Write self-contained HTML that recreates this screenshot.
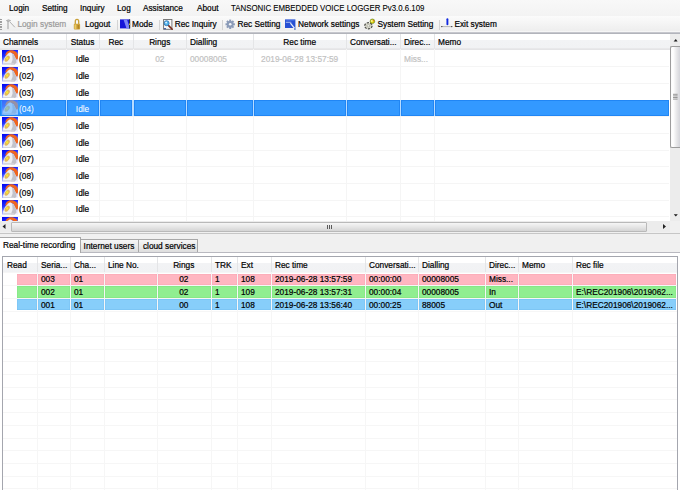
<!DOCTYPE html><html><head><meta charset="utf-8"><style>
*{margin:0;padding:0;box-sizing:border-box}
html,body{width:680px;height:490px;overflow:hidden;background:#f0f0f0;font-family:"Liberation Sans", sans-serif;font-size:8.3px}
.a{position:absolute}
.t{position:absolute;white-space:nowrap;line-height:10px;font-size:8.3px;-webkit-text-stroke:0.2px currentColor}
.g{font-size:8.9px;transform:scaleX(0.935);transform-origin:0 0;line-height:10px}
.gc{font-size:8.9px;transform:scaleX(0.935);transform-origin:50% 0;line-height:10px}
</style></head><body><div class="a" style="left:0;top:0;width:680px;height:16px;background:linear-gradient(#f8f8f8,#f3f3f3)"></div>
<div class="t " style="left:8.5px;top:3.1px;color:#000;font-size:8.8px;transform:scaleX(0.935);transform-origin:0 0">Login</div>
<div class="t " style="left:42px;top:3.1px;color:#000;font-size:8.8px;transform:scaleX(0.935);transform-origin:0 0">Setting</div>
<div class="t " style="left:79.8px;top:3.1px;color:#000;font-size:8.8px;transform:scaleX(0.935);transform-origin:0 0">Inquiry</div>
<div class="t " style="left:116.7px;top:3.1px;color:#000;font-size:8.8px;transform:scaleX(0.935);transform-origin:0 0">Log</div>
<div class="t " style="left:143.2px;top:3.1px;color:#000;font-size:8.8px;transform:scaleX(0.935);transform-origin:0 0">Assistance</div>
<div class="t " style="left:196.8px;top:3.1px;color:#000;font-size:8.8px;transform:scaleX(0.935);transform-origin:0 0">About</div>
<div class="t " style="left:231.2px;top:2.7px;color:#000;font-size:9.4px;transform:scaleX(0.839);transform-origin:0 0;-webkit-text-stroke:0.1px">TANSONIC EMBEDDED VOICE LOGGER Pv3.0.6.109</div>
<div class="a" style="left:0;top:16px;width:680px;height:16px;background:linear-gradient(#fbfbfb,#ededed)"></div>
<div class="a" style="left:0;top:31px;width:680px;height:1px;background:#f6f6f6"></div>
<div class="a" style="left:0;top:32px;width:680px;height:1px;background:#c6c7cd"></div>
<div class="a" style="left:0;top:33px;width:680px;height:1px;background:#b2b4bb"></div>
<div class="t " style="left:17.4px;top:18.6px;color:#9a9a9a;">Login system</div>
<div class="t " style="left:85px;top:18.6px;color:#000;">Logout</div>
<div class="t " style="left:132px;top:18.6px;color:#000;">Mode</div>
<div class="t " style="left:174.75px;top:18.6px;color:#000;">Rec Inquiry</div>
<div class="t " style="left:237.5px;top:18.6px;color:#000;">Rec Setting</div>
<div class="t " style="left:298.1px;top:18.6px;color:#000;">Network settings</div>
<div class="t " style="left:377.5px;top:18.6px;color:#000;">System Setting</div>
<div class="t " style="left:454.4px;top:18.6px;color:#000;">Exit system</div>
<div class="a" style="left:117px;top:19.5px;width:1px;height:10px;background:#d4d4d4"></div>
<div class="a" style="left:158.75px;top:19.5px;width:1px;height:10px;background:#d4d4d4"></div>
<div class="a" style="left:221.9px;top:19.5px;width:1px;height:10px;background:#d4d4d4"></div>
<div class="a" style="left:438.75px;top:19.5px;width:1px;height:10px;background:#d4d4d4"></div>
<div class="a" style="left:0;top:18.5px;width:1.5px;height:1.5px;background:#a0a0a0"></div>
<div class="a" style="left:0;top:21px;width:1.5px;height:1.5px;background:#a0a0a0"></div>
<div class="a" style="left:0;top:23.5px;width:1.5px;height:1.5px;background:#a0a0a0"></div>
<div class="a" style="left:0;top:26px;width:1.5px;height:1.5px;background:#a0a0a0"></div>
<div class="a" style="left:0;top:28.5px;width:1.5px;height:1.5px;background:#a0a0a0"></div>
<svg class="a" style="left:0;top:16px" width="680" height="16" viewBox="0 16 680 16"><rect x="0" y="18.9" width="0.8" height="0.9" fill="#9a9a9a"/><rect x="0" y="21.5" width="0.8" height="0.9" fill="#9a9a9a"/><rect x="0" y="24.1" width="0.8" height="0.9" fill="#9a9a9a"/><rect x="0" y="26.9" width="0.8" height="0.9" fill="#9a9a9a"/><path d="M6.4 20.6 Q8.5 19 10.6 20.6 Q8.5 22.4 6.4 20.6 Z" fill="#c4c4c4" stroke="#a8a8a8" stroke-width="0.8"/><path d="M8 21.6 L8 28.6" stroke="#a4a4a4" stroke-width="1.1" stroke-linecap="round"/><path d="M10.2 22.3 L14.6 27" stroke="#b0b0b0" stroke-width="1" stroke-linecap="round"/><path d="M75.3 24.5 L75.3 21.4 Q75.3 19.4 77 19.4 Q78.7 19.4 78.7 21.4 L78.7 24.5" stroke="#c9a038" stroke-width="1.3" fill="none"/><rect x="73.8" y="23.8" width="6.3" height="5.8" rx="1" fill="#cfa23a"/><rect x="74.5" y="24.5" width="1.8" height="4.4" fill="#e6c868"/><rect x="77.6" y="25" width="1.6" height="3.8" fill="#b08428"/><rect x="120" y="19.4" width="10" height="9" fill="#1414d8"/><path d="M123.5 19.4 L127 19.4 L130 28.4 L126.5 28.4 Z" fill="#7c84f8"/><rect x="129" y="19.4" width="1.2" height="9" fill="#203040"/><rect x="129" y="23.5" width="1.2" height="1.5" fill="#c0b040"/><rect x="163.6" y="19.5" width="8.3" height="9.8" fill="#fafafa" stroke="#6c6c6c" stroke-width="0.9"/><path d="M168.6 25.6 L172.2 29.2" stroke="#7a2a18" stroke-width="1.6" stroke-linecap="round"/><circle cx="166.6" cy="23.2" r="2.5" fill="#58b8ee" stroke="#2a6aa8" stroke-width="0.8"/><circle cx="166.1" cy="22.6" r="0.9" fill="#e8f8ff"/><path d="M164 28.7 L166 28.7" stroke="#2a4aa0" stroke-width="1"/><g transform="translate(230.2 24.3)" fill="#8b9bb8"><circle r="3.4"/><rect x="-1" y="-4.7" width="2" height="9.4"/><rect x="-4.7" y="-1" width="9.4" height="2"/><rect x="-1" y="-4.7" width="2" height="9.4" transform="rotate(45)"/><rect x="-1" y="-4.7" width="2" height="9.4" transform="rotate(-45)"/><circle r="1.3" fill="#f4f6fa"/></g><rect x="285" y="19.4" width="10.4" height="8.6" fill="#2650d4"/><rect x="285.8" y="21.8" width="5.5" height="0.9" fill="#b8c8f4"/><rect x="285.8" y="20.3" width="8.8" height="0.6" fill="#4a78e8"/><path d="M290.8 23.6 L294.6 28.4" stroke="#e8eef8" stroke-width="1.3" stroke-linecap="round"/><circle cx="294.9" cy="29" r="0.9" fill="#5a7ac8"/><ellipse cx="368.4" cy="25.8" rx="3.7" ry="3.1" fill="#d6d6c8" stroke="#4c4c48" stroke-width="1.2" stroke-dasharray="2.2 1.3"/><ellipse cx="368.4" cy="25.8" rx="1.4" ry="1.1" fill="#f2f2ea" stroke="#8a8a80" stroke-width="0.5"/><circle cx="372.4" cy="21.3" r="2.3" fill="#d8d010" stroke="#587018" stroke-width="0.6"/><circle cx="371.8" cy="20.9" r="1" fill="#fffa90"/><circle cx="373.6" cy="20.6" r="0.7" fill="#f07010"/><path d="M447.4 19.3 L447.4 24.2" stroke="#1028e0" stroke-width="1.9" stroke-linecap="round"/><path d="M441.8 26.6 L451.8 26.6" stroke="#b8b8b8" stroke-width="1"/><circle cx="441.8" cy="26.6" r="0.7" fill="#303030"/><circle cx="451.8" cy="26.6" r="0.7" fill="#303030"/></svg>
<div class="a" style="left:0;top:34px;width:670px;height:187px;background:#fff"></div>
<div class="a" style="left:0;top:34px;width:670px;height:15px;background:linear-gradient(#ffffff 0%,#ffffff 40%,#f2f3f5 42%,#f1f2f4 100%)"></div>
<div class="a" style="left:0;top:47.5px;width:670px;height:2px;background:linear-gradient(#eaeaec,#e2e2e4)"></div>
<div class="a" style="left:65.8px;top:34px;width:1px;height:15px;background:#e4e5e7"></div>
<div class="a" style="left:98.9px;top:34px;width:1px;height:15px;background:#e4e5e7"></div>
<div class="a" style="left:132.5px;top:34px;width:1px;height:15px;background:#e4e5e7"></div>
<div class="a" style="left:186.0px;top:34px;width:1px;height:15px;background:#e4e5e7"></div>
<div class="a" style="left:253.0px;top:34px;width:1px;height:15px;background:#e4e5e7"></div>
<div class="a" style="left:346.3px;top:34px;width:1px;height:15px;background:#e4e5e7"></div>
<div class="a" style="left:400.1px;top:34px;width:1px;height:15px;background:#e4e5e7"></div>
<div class="a" style="left:433.6px;top:34px;width:1px;height:15px;background:#e4e5e7"></div>
<div class="t g" style="left:2.8px;top:36.85px;color:#000;">Channels</div>
<div class="t gc" style="left:66.0px;width:33.10000000000001px;text-align:center;top:36.85px;color:#000;">Status</div>
<div class="t gc" style="left:99.10000000000001px;width:33.599999999999994px;text-align:center;top:36.85px;color:#000;">Rec</div>
<div class="t gc" style="left:132.7px;width:53.5px;text-align:center;top:36.85px;color:#000;">Rings</div>
<div class="t g" style="left:190.1px;top:36.85px;color:#000;">Dialling</div>
<div class="t gc" style="left:253.2px;width:93.30000000000001px;text-align:center;top:36.85px;color:#000;">Rec time</div>
<div class="t g" style="left:350.40000000000003px;top:36.85px;color:#000;">Conversati...</div>
<div class="t g" style="left:404.20000000000005px;top:36.85px;color:#000;">Direc...</div>
<div class="t g" style="left:437.70000000000005px;top:36.85px;color:#000;">Memo</div>
<div class="a" style="left:0;top:66.167px;width:669px;height:1px;background:#f5f5f5"></div>
<div class="a" style="left:0;top:82.834px;width:669px;height:1px;background:#f5f5f5"></div>
<div class="a" style="left:0;top:99.501px;width:669px;height:1px;background:#f5f5f5"></div>
<div class="a" style="left:0;top:100.001px;width:669px;height:16px;background:#3399ff"></div>
<div class="a" style="left:0;top:116.168px;width:669px;height:1px;background:#f5f5f5"></div>
<div class="a" style="left:0;top:132.835px;width:669px;height:1px;background:#f5f5f5"></div>
<div class="a" style="left:0;top:149.502px;width:669px;height:1px;background:#f5f5f5"></div>
<div class="a" style="left:0;top:166.169px;width:669px;height:1px;background:#f5f5f5"></div>
<div class="a" style="left:0;top:182.836px;width:669px;height:1px;background:#f5f5f5"></div>
<div class="a" style="left:0;top:199.50300000000001px;width:669px;height:1px;background:#f5f5f5"></div>
<div class="a" style="left:0;top:216.17000000000002px;width:669px;height:1px;background:#f5f5f5"></div>
<div class="a" style="left:0;top:232.83700000000002px;width:669px;height:1px;background:#f5f5f5"></div>
<div class="a" style="left:65.8px;top:49px;width:1px;height:172px;background:#f5f5f5"></div>
<div class="a" style="left:98.9px;top:49px;width:1px;height:172px;background:#f5f5f5"></div>
<div class="a" style="left:132.5px;top:49px;width:1px;height:172px;background:#f5f5f5"></div>
<div class="a" style="left:186.0px;top:49px;width:1px;height:172px;background:#f5f5f5"></div>
<div class="a" style="left:253.0px;top:49px;width:1px;height:172px;background:#f5f5f5"></div>
<div class="a" style="left:346.3px;top:49px;width:1px;height:172px;background:#f5f5f5"></div>
<div class="a" style="left:400.1px;top:49px;width:1px;height:172px;background:#f5f5f5"></div>
<div class="a" style="left:433.6px;top:49px;width:1px;height:172px;background:#f5f5f5"></div>
<div class="a" style="left:0;top:100px;width:669px;height:16px;background:#b8dcff"></div>
<div class="a" style="left:0px;top:100px;width:65.8px;height:16px;background:#3399ff;box-shadow:inset 0 0 0 1px #2186f4"></div>
<div class="a" style="left:66.8px;top:100px;width:32.10000000000001px;height:16px;background:#3399ff;box-shadow:inset 0 0 0 1px #2186f4"></div>
<div class="a" style="left:99.9px;top:100px;width:32.599999999999994px;height:16px;background:#3399ff;box-shadow:inset 0 0 0 1px #2186f4"></div>
<div class="a" style="left:133.5px;top:100px;width:52.5px;height:16px;background:#3399ff;box-shadow:inset 0 0 0 1px #2186f4"></div>
<div class="a" style="left:187.0px;top:100px;width:66.0px;height:16px;background:#3399ff;box-shadow:inset 0 0 0 1px #2186f4"></div>
<div class="a" style="left:254.0px;top:100px;width:92.30000000000001px;height:16px;background:#3399ff;box-shadow:inset 0 0 0 1px #2186f4"></div>
<div class="a" style="left:347.3px;top:100px;width:52.80000000000001px;height:16px;background:#3399ff;box-shadow:inset 0 0 0 1px #2186f4"></div>
<div class="a" style="left:401.1px;top:100px;width:32.5px;height:16px;background:#3399ff;box-shadow:inset 0 0 0 1px #2186f4"></div>
<div class="a" style="left:434.6px;top:100px;width:234.39999999999998px;height:16px;background:#3399ff;box-shadow:inset 0 0 0 1px #2186f4"></div>
<div class="a" style="left:1.5px;top:50.35px;width:16.2px;height:14.6px;overflow:hidden"><svg width="16.2" height="14.6" viewBox="0 0 16.2 14.6"><defs><linearGradient id="bg0" x1="0" y1="0" x2="0.45" y2="1"><stop offset="0" stop-color="#0000f0"/><stop offset="0.4" stop-color="#2232ff"/><stop offset="0.72" stop-color="#98a0ff"/><stop offset="1" stop-color="#ececff"/></linearGradient></defs>
<rect x="0" y="0" width="16.2" height="14.6" fill="url(#bg0)"/>
<path d="M3.4 5.8 C3.2 2.8,5.6 0.3,9 0.3 C12.6 0.3,15.6 2.4,16.1 5.6 C16.3 7.2,16 8.6,15.4 9.4 L13 9 C13.2 7.2,12.6 4.6,10.6 3.4 C9 2.6,6.8 2.8,5.8 4.8 Z" fill="#f0661e"/>
<path d="M0.8 12 L3 7 L6.2 3.4 L8 2.3 L9.6 3.1 L11.6 4.4 L13.8 8.4 L14.6 12.6 L12.6 14.4 L2 14.4 Z" fill="#efeff3"/>
<path d="M10.2 4 L11.6 4.4 L13.8 8.4 L14.6 12.6 L12.6 14.4 L8.8 14.4 L10.6 9.6 Z" fill="#c2c2ca"/>
<path d="M1.6 14.4 L12.6 14.4 L12 13.2 L2.2 12.9 Z" fill="#d4d4dc"/>
<ellipse cx="5.2" cy="8.7" rx="2" ry="3.4" transform="rotate(36 5.2 8.7)" fill="#e4b85a"/>
<circle cx="5.1" cy="8.4" r="1.1" fill="#f8ec30"/>
</svg></div>
<div class="t g" style="left:19px;top:54.2px;color:#000;">(01)</div>
<div class="t gc" style="left:66.0px;width:33.10000000000001px;text-align:center;top:54.25px;color:#000;">Idle</div>
<div class="a" style="left:1.5px;top:67.017px;width:16.2px;height:14.6px;overflow:hidden"><svg width="16.2" height="14.6" viewBox="0 0 16.2 14.6"><defs><linearGradient id="bg1" x1="0" y1="0" x2="0.45" y2="1"><stop offset="0" stop-color="#0000f0"/><stop offset="0.4" stop-color="#2232ff"/><stop offset="0.72" stop-color="#98a0ff"/><stop offset="1" stop-color="#ececff"/></linearGradient></defs>
<rect x="0" y="0" width="16.2" height="14.6" fill="url(#bg1)"/>
<path d="M3.4 5.8 C3.2 2.8,5.6 0.3,9 0.3 C12.6 0.3,15.6 2.4,16.1 5.6 C16.3 7.2,16 8.6,15.4 9.4 L13 9 C13.2 7.2,12.6 4.6,10.6 3.4 C9 2.6,6.8 2.8,5.8 4.8 Z" fill="#f0661e"/>
<path d="M0.8 12 L3 7 L6.2 3.4 L8 2.3 L9.6 3.1 L11.6 4.4 L13.8 8.4 L14.6 12.6 L12.6 14.4 L2 14.4 Z" fill="#efeff3"/>
<path d="M10.2 4 L11.6 4.4 L13.8 8.4 L14.6 12.6 L12.6 14.4 L8.8 14.4 L10.6 9.6 Z" fill="#c2c2ca"/>
<path d="M1.6 14.4 L12.6 14.4 L12 13.2 L2.2 12.9 Z" fill="#d4d4dc"/>
<ellipse cx="5.2" cy="8.7" rx="2" ry="3.4" transform="rotate(36 5.2 8.7)" fill="#e4b85a"/>
<circle cx="5.1" cy="8.4" r="1.1" fill="#f8ec30"/>
</svg></div>
<div class="t g" style="left:19px;top:70.867px;color:#000;">(02)</div>
<div class="t gc" style="left:66.0px;width:33.10000000000001px;text-align:center;top:70.917px;color:#000;">Idle</div>
<div class="a" style="left:1.5px;top:83.684px;width:16.2px;height:14.6px;overflow:hidden"><svg width="16.2" height="14.6" viewBox="0 0 16.2 14.6"><defs><linearGradient id="bg2" x1="0" y1="0" x2="0.45" y2="1"><stop offset="0" stop-color="#0000f0"/><stop offset="0.4" stop-color="#2232ff"/><stop offset="0.72" stop-color="#98a0ff"/><stop offset="1" stop-color="#ececff"/></linearGradient></defs>
<rect x="0" y="0" width="16.2" height="14.6" fill="url(#bg2)"/>
<path d="M3.4 5.8 C3.2 2.8,5.6 0.3,9 0.3 C12.6 0.3,15.6 2.4,16.1 5.6 C16.3 7.2,16 8.6,15.4 9.4 L13 9 C13.2 7.2,12.6 4.6,10.6 3.4 C9 2.6,6.8 2.8,5.8 4.8 Z" fill="#f0661e"/>
<path d="M0.8 12 L3 7 L6.2 3.4 L8 2.3 L9.6 3.1 L11.6 4.4 L13.8 8.4 L14.6 12.6 L12.6 14.4 L2 14.4 Z" fill="#efeff3"/>
<path d="M10.2 4 L11.6 4.4 L13.8 8.4 L14.6 12.6 L12.6 14.4 L8.8 14.4 L10.6 9.6 Z" fill="#c2c2ca"/>
<path d="M1.6 14.4 L12.6 14.4 L12 13.2 L2.2 12.9 Z" fill="#d4d4dc"/>
<ellipse cx="5.2" cy="8.7" rx="2" ry="3.4" transform="rotate(36 5.2 8.7)" fill="#e4b85a"/>
<circle cx="5.1" cy="8.4" r="1.1" fill="#f8ec30"/>
</svg></div>
<div class="t g" style="left:19px;top:87.534px;color:#000;">(03)</div>
<div class="t gc" style="left:66.0px;width:33.10000000000001px;text-align:center;top:87.584px;color:#000;">Idle</div>
<div class="a" style="left:1.5px;top:100.351px;width:16.2px;height:14.6px;overflow:hidden"><svg width="16.2" height="14.6" viewBox="0 0 16.2 14.6"><defs><linearGradient id="bg3" x1="0" y1="0" x2="0.45" y2="1"><stop offset="0" stop-color="#0000f0"/><stop offset="0.4" stop-color="#2232ff"/><stop offset="0.72" stop-color="#98a0ff"/><stop offset="1" stop-color="#ececff"/></linearGradient></defs>
<rect x="0" y="0" width="16.2" height="14.6" fill="url(#bg3)"/>
<path d="M3.4 5.8 C3.2 2.8,5.6 0.3,9 0.3 C12.6 0.3,15.6 2.4,16.1 5.6 C16.3 7.2,16 8.6,15.4 9.4 L13 9 C13.2 7.2,12.6 4.6,10.6 3.4 C9 2.6,6.8 2.8,5.8 4.8 Z" fill="#f0661e"/>
<path d="M0.8 12 L3 7 L6.2 3.4 L8 2.3 L9.6 3.1 L11.6 4.4 L13.8 8.4 L14.6 12.6 L12.6 14.4 L2 14.4 Z" fill="#efeff3"/>
<path d="M10.2 4 L11.6 4.4 L13.8 8.4 L14.6 12.6 L12.6 14.4 L8.8 14.4 L10.6 9.6 Z" fill="#c2c2ca"/>
<path d="M1.6 14.4 L12.6 14.4 L12 13.2 L2.2 12.9 Z" fill="#d4d4dc"/>
<ellipse cx="5.2" cy="8.7" rx="2" ry="3.4" transform="rotate(36 5.2 8.7)" fill="#e4b85a"/>
<circle cx="5.1" cy="8.4" r="1.1" fill="#f8ec30"/>
</svg></div>
<div class="a" style="left:1.5px;top:100.351px;width:16.2px;height:14.6px;background:linear-gradient(rgba(255,255,255,0.12),rgba(255,255,255,0.12)),rgba(51,153,255,0.55)"></div>
<div class="t g" style="left:19px;top:104.20100000000001px;color:#fff;-webkit-text-stroke:0">(04)</div>
<div class="t gc" style="left:66.0px;width:33.10000000000001px;text-align:center;top:104.251px;color:#fff;-webkit-text-stroke:0.05px">Idle</div>
<div class="a" style="left:1.5px;top:117.018px;width:16.2px;height:14.6px;overflow:hidden"><svg width="16.2" height="14.6" viewBox="0 0 16.2 14.6"><defs><linearGradient id="bg4" x1="0" y1="0" x2="0.45" y2="1"><stop offset="0" stop-color="#0000f0"/><stop offset="0.4" stop-color="#2232ff"/><stop offset="0.72" stop-color="#98a0ff"/><stop offset="1" stop-color="#ececff"/></linearGradient></defs>
<rect x="0" y="0" width="16.2" height="14.6" fill="url(#bg4)"/>
<path d="M3.4 5.8 C3.2 2.8,5.6 0.3,9 0.3 C12.6 0.3,15.6 2.4,16.1 5.6 C16.3 7.2,16 8.6,15.4 9.4 L13 9 C13.2 7.2,12.6 4.6,10.6 3.4 C9 2.6,6.8 2.8,5.8 4.8 Z" fill="#f0661e"/>
<path d="M0.8 12 L3 7 L6.2 3.4 L8 2.3 L9.6 3.1 L11.6 4.4 L13.8 8.4 L14.6 12.6 L12.6 14.4 L2 14.4 Z" fill="#efeff3"/>
<path d="M10.2 4 L11.6 4.4 L13.8 8.4 L14.6 12.6 L12.6 14.4 L8.8 14.4 L10.6 9.6 Z" fill="#c2c2ca"/>
<path d="M1.6 14.4 L12.6 14.4 L12 13.2 L2.2 12.9 Z" fill="#d4d4dc"/>
<ellipse cx="5.2" cy="8.7" rx="2" ry="3.4" transform="rotate(36 5.2 8.7)" fill="#e4b85a"/>
<circle cx="5.1" cy="8.4" r="1.1" fill="#f8ec30"/>
</svg></div>
<div class="t g" style="left:19px;top:120.86800000000001px;color:#000;">(05)</div>
<div class="t gc" style="left:66.0px;width:33.10000000000001px;text-align:center;top:120.918px;color:#000;">Idle</div>
<div class="a" style="left:1.5px;top:133.685px;width:16.2px;height:14.6px;overflow:hidden"><svg width="16.2" height="14.6" viewBox="0 0 16.2 14.6"><defs><linearGradient id="bg5" x1="0" y1="0" x2="0.45" y2="1"><stop offset="0" stop-color="#0000f0"/><stop offset="0.4" stop-color="#2232ff"/><stop offset="0.72" stop-color="#98a0ff"/><stop offset="1" stop-color="#ececff"/></linearGradient></defs>
<rect x="0" y="0" width="16.2" height="14.6" fill="url(#bg5)"/>
<path d="M3.4 5.8 C3.2 2.8,5.6 0.3,9 0.3 C12.6 0.3,15.6 2.4,16.1 5.6 C16.3 7.2,16 8.6,15.4 9.4 L13 9 C13.2 7.2,12.6 4.6,10.6 3.4 C9 2.6,6.8 2.8,5.8 4.8 Z" fill="#f0661e"/>
<path d="M0.8 12 L3 7 L6.2 3.4 L8 2.3 L9.6 3.1 L11.6 4.4 L13.8 8.4 L14.6 12.6 L12.6 14.4 L2 14.4 Z" fill="#efeff3"/>
<path d="M10.2 4 L11.6 4.4 L13.8 8.4 L14.6 12.6 L12.6 14.4 L8.8 14.4 L10.6 9.6 Z" fill="#c2c2ca"/>
<path d="M1.6 14.4 L12.6 14.4 L12 13.2 L2.2 12.9 Z" fill="#d4d4dc"/>
<ellipse cx="5.2" cy="8.7" rx="2" ry="3.4" transform="rotate(36 5.2 8.7)" fill="#e4b85a"/>
<circle cx="5.1" cy="8.4" r="1.1" fill="#f8ec30"/>
</svg></div>
<div class="t g" style="left:19px;top:137.535px;color:#000;">(06)</div>
<div class="t gc" style="left:66.0px;width:33.10000000000001px;text-align:center;top:137.585px;color:#000;">Idle</div>
<div class="a" style="left:1.5px;top:150.352px;width:16.2px;height:14.6px;overflow:hidden"><svg width="16.2" height="14.6" viewBox="0 0 16.2 14.6"><defs><linearGradient id="bg6" x1="0" y1="0" x2="0.45" y2="1"><stop offset="0" stop-color="#0000f0"/><stop offset="0.4" stop-color="#2232ff"/><stop offset="0.72" stop-color="#98a0ff"/><stop offset="1" stop-color="#ececff"/></linearGradient></defs>
<rect x="0" y="0" width="16.2" height="14.6" fill="url(#bg6)"/>
<path d="M3.4 5.8 C3.2 2.8,5.6 0.3,9 0.3 C12.6 0.3,15.6 2.4,16.1 5.6 C16.3 7.2,16 8.6,15.4 9.4 L13 9 C13.2 7.2,12.6 4.6,10.6 3.4 C9 2.6,6.8 2.8,5.8 4.8 Z" fill="#f0661e"/>
<path d="M0.8 12 L3 7 L6.2 3.4 L8 2.3 L9.6 3.1 L11.6 4.4 L13.8 8.4 L14.6 12.6 L12.6 14.4 L2 14.4 Z" fill="#efeff3"/>
<path d="M10.2 4 L11.6 4.4 L13.8 8.4 L14.6 12.6 L12.6 14.4 L8.8 14.4 L10.6 9.6 Z" fill="#c2c2ca"/>
<path d="M1.6 14.4 L12.6 14.4 L12 13.2 L2.2 12.9 Z" fill="#d4d4dc"/>
<ellipse cx="5.2" cy="8.7" rx="2" ry="3.4" transform="rotate(36 5.2 8.7)" fill="#e4b85a"/>
<circle cx="5.1" cy="8.4" r="1.1" fill="#f8ec30"/>
</svg></div>
<div class="t g" style="left:19px;top:154.202px;color:#000;">(07)</div>
<div class="t gc" style="left:66.0px;width:33.10000000000001px;text-align:center;top:154.252px;color:#000;">Idle</div>
<div class="a" style="left:1.5px;top:167.019px;width:16.2px;height:14.6px;overflow:hidden"><svg width="16.2" height="14.6" viewBox="0 0 16.2 14.6"><defs><linearGradient id="bg7" x1="0" y1="0" x2="0.45" y2="1"><stop offset="0" stop-color="#0000f0"/><stop offset="0.4" stop-color="#2232ff"/><stop offset="0.72" stop-color="#98a0ff"/><stop offset="1" stop-color="#ececff"/></linearGradient></defs>
<rect x="0" y="0" width="16.2" height="14.6" fill="url(#bg7)"/>
<path d="M3.4 5.8 C3.2 2.8,5.6 0.3,9 0.3 C12.6 0.3,15.6 2.4,16.1 5.6 C16.3 7.2,16 8.6,15.4 9.4 L13 9 C13.2 7.2,12.6 4.6,10.6 3.4 C9 2.6,6.8 2.8,5.8 4.8 Z" fill="#f0661e"/>
<path d="M0.8 12 L3 7 L6.2 3.4 L8 2.3 L9.6 3.1 L11.6 4.4 L13.8 8.4 L14.6 12.6 L12.6 14.4 L2 14.4 Z" fill="#efeff3"/>
<path d="M10.2 4 L11.6 4.4 L13.8 8.4 L14.6 12.6 L12.6 14.4 L8.8 14.4 L10.6 9.6 Z" fill="#c2c2ca"/>
<path d="M1.6 14.4 L12.6 14.4 L12 13.2 L2.2 12.9 Z" fill="#d4d4dc"/>
<ellipse cx="5.2" cy="8.7" rx="2" ry="3.4" transform="rotate(36 5.2 8.7)" fill="#e4b85a"/>
<circle cx="5.1" cy="8.4" r="1.1" fill="#f8ec30"/>
</svg></div>
<div class="t g" style="left:19px;top:170.869px;color:#000;">(08)</div>
<div class="t gc" style="left:66.0px;width:33.10000000000001px;text-align:center;top:170.919px;color:#000;">Idle</div>
<div class="a" style="left:1.5px;top:183.686px;width:16.2px;height:14.6px;overflow:hidden"><svg width="16.2" height="14.6" viewBox="0 0 16.2 14.6"><defs><linearGradient id="bg8" x1="0" y1="0" x2="0.45" y2="1"><stop offset="0" stop-color="#0000f0"/><stop offset="0.4" stop-color="#2232ff"/><stop offset="0.72" stop-color="#98a0ff"/><stop offset="1" stop-color="#ececff"/></linearGradient></defs>
<rect x="0" y="0" width="16.2" height="14.6" fill="url(#bg8)"/>
<path d="M3.4 5.8 C3.2 2.8,5.6 0.3,9 0.3 C12.6 0.3,15.6 2.4,16.1 5.6 C16.3 7.2,16 8.6,15.4 9.4 L13 9 C13.2 7.2,12.6 4.6,10.6 3.4 C9 2.6,6.8 2.8,5.8 4.8 Z" fill="#f0661e"/>
<path d="M0.8 12 L3 7 L6.2 3.4 L8 2.3 L9.6 3.1 L11.6 4.4 L13.8 8.4 L14.6 12.6 L12.6 14.4 L2 14.4 Z" fill="#efeff3"/>
<path d="M10.2 4 L11.6 4.4 L13.8 8.4 L14.6 12.6 L12.6 14.4 L8.8 14.4 L10.6 9.6 Z" fill="#c2c2ca"/>
<path d="M1.6 14.4 L12.6 14.4 L12 13.2 L2.2 12.9 Z" fill="#d4d4dc"/>
<ellipse cx="5.2" cy="8.7" rx="2" ry="3.4" transform="rotate(36 5.2 8.7)" fill="#e4b85a"/>
<circle cx="5.1" cy="8.4" r="1.1" fill="#f8ec30"/>
</svg></div>
<div class="t g" style="left:19px;top:187.536px;color:#000;">(09)</div>
<div class="t gc" style="left:66.0px;width:33.10000000000001px;text-align:center;top:187.586px;color:#000;">Idle</div>
<div class="a" style="left:1.5px;top:200.353px;width:16.2px;height:14.6px;overflow:hidden"><svg width="16.2" height="14.6" viewBox="0 0 16.2 14.6"><defs><linearGradient id="bg9" x1="0" y1="0" x2="0.45" y2="1"><stop offset="0" stop-color="#0000f0"/><stop offset="0.4" stop-color="#2232ff"/><stop offset="0.72" stop-color="#98a0ff"/><stop offset="1" stop-color="#ececff"/></linearGradient></defs>
<rect x="0" y="0" width="16.2" height="14.6" fill="url(#bg9)"/>
<path d="M3.4 5.8 C3.2 2.8,5.6 0.3,9 0.3 C12.6 0.3,15.6 2.4,16.1 5.6 C16.3 7.2,16 8.6,15.4 9.4 L13 9 C13.2 7.2,12.6 4.6,10.6 3.4 C9 2.6,6.8 2.8,5.8 4.8 Z" fill="#f0661e"/>
<path d="M0.8 12 L3 7 L6.2 3.4 L8 2.3 L9.6 3.1 L11.6 4.4 L13.8 8.4 L14.6 12.6 L12.6 14.4 L2 14.4 Z" fill="#efeff3"/>
<path d="M10.2 4 L11.6 4.4 L13.8 8.4 L14.6 12.6 L12.6 14.4 L8.8 14.4 L10.6 9.6 Z" fill="#c2c2ca"/>
<path d="M1.6 14.4 L12.6 14.4 L12 13.2 L2.2 12.9 Z" fill="#d4d4dc"/>
<ellipse cx="5.2" cy="8.7" rx="2" ry="3.4" transform="rotate(36 5.2 8.7)" fill="#e4b85a"/>
<circle cx="5.1" cy="8.4" r="1.1" fill="#f8ec30"/>
</svg></div>
<div class="t g" style="left:19px;top:204.203px;color:#000;">(10)</div>
<div class="t gc" style="left:66.0px;width:33.10000000000001px;text-align:center;top:204.25300000000001px;color:#000;">Idle</div>
<div class="a" style="left:1.5px;top:217.02px;width:16.2px;height:14.6px;overflow:hidden"><svg width="16.2" height="14.6" viewBox="0 0 16.2 14.6"><defs><linearGradient id="bg10" x1="0" y1="0" x2="0.45" y2="1"><stop offset="0" stop-color="#0000f0"/><stop offset="0.4" stop-color="#2232ff"/><stop offset="0.72" stop-color="#98a0ff"/><stop offset="1" stop-color="#ececff"/></linearGradient></defs>
<rect x="0" y="0" width="16.2" height="14.6" fill="url(#bg10)"/>
<path d="M3.4 5.8 C3.2 2.8,5.6 0.3,9 0.3 C12.6 0.3,15.6 2.4,16.1 5.6 C16.3 7.2,16 8.6,15.4 9.4 L13 9 C13.2 7.2,12.6 4.6,10.6 3.4 C9 2.6,6.8 2.8,5.8 4.8 Z" fill="#f0661e"/>
<path d="M0.8 12 L3 7 L6.2 3.4 L8 2.3 L9.6 3.1 L11.6 4.4 L13.8 8.4 L14.6 12.6 L12.6 14.4 L2 14.4 Z" fill="#efeff3"/>
<path d="M10.2 4 L11.6 4.4 L13.8 8.4 L14.6 12.6 L12.6 14.4 L8.8 14.4 L10.6 9.6 Z" fill="#c2c2ca"/>
<path d="M1.6 14.4 L12.6 14.4 L12 13.2 L2.2 12.9 Z" fill="#d4d4dc"/>
<ellipse cx="5.2" cy="8.7" rx="2" ry="3.4" transform="rotate(36 5.2 8.7)" fill="#e4b85a"/>
<circle cx="5.1" cy="8.4" r="1.1" fill="#f8ec30"/>
</svg></div>
<div class="t gc" style="left:132.7px;width:53.5px;text-align:center;top:53.75px;color:#c2c2c2;">02</div>
<div class="t g" style="left:190.1px;top:53.75px;color:#c2c2c2;">00008005</div>
<div class="t gc" style="left:253.2px;width:93.30000000000001px;text-align:center;top:53.75px;color:#c2c2c2;">2019-06-28 13:57:59</div>
<div class="t g" style="left:404.20000000000005px;top:53.75px;color:#c2c2c2;">Miss...</div>
<div class="a" style="left:670px;top:34px;width:10px;height:187px;background:#ececec"></div>
<div class="a" style="left:670px;top:46px;width:11px;height:101.5px;background:linear-gradient(90deg,#fafafa 0%,#ffffff 20%,#e8e8ea 55%,#cfd0d6 100%);border:1px solid #9c9c9c;border-right:none;border-radius:2px 0 0 2px"></div>
<svg class="a" style="left:670px;top:90px" width="10" height="12" viewBox="670 90 10 12"><path d="M673 94.3H677.6M673 95.9H677.6M673 97.5H677.6M673 99.1H677.6" stroke="#7a7a7a" stroke-width="0.75"/></svg>
<svg class="a" style="left:670px;top:34px" width="10" height="10"><path d="M3.6 7.4 L5.8 4.9 L7.6 7.4 Z" fill="#1a1a1a"/></svg>
<svg class="a" style="left:670px;top:211px" width="10" height="8"><path d="M3.8 3.2 L5.8 5.6 L7.8 3.2 Z" fill="#1a1a1a"/></svg>
<div class="a" style="left:0;top:221px;width:680px;height:11px;background:#ececec"></div>
<div class="a" style="left:11px;top:222px;width:636px;height:10px;background:linear-gradient(#f6f6f6 0%,#e6e6e6 50%,#d4d4d4 100%);border:1px solid #b9b9b9;border-radius:1px"></div>
<svg class="a" style="left:0;top:221px" width="10" height="11"><path d="M5.5 3 L2.5 5.5 L5.5 8 Z" fill="#222"/></svg>
<svg class="a" style="left:660px;top:221px" width="10" height="11"><path d="M3 3 L6 5.5 L3 8 Z" fill="#222"/></svg>
<div class="a" style="left:669.5px;top:221px;width:10.5px;height:11px;background:#f0f0f0"></div>
<div class="a" style="left:0;top:233px;width:680px;height:1px;background:#c6c6c6"></div>
<div class="a" style="left:326.5px;top:224.5px;width:0.9px;height:4px;background:#5a5a5a"></div>
<div class="a" style="left:328.5px;top:224.5px;width:0.9px;height:4px;background:#5a5a5a"></div>
<div class="a" style="left:330.5px;top:224.5px;width:0.9px;height:4px;background:#5a5a5a"></div>
<div class="a" style="left:0;top:237px;width:81px;height:20px;background:#fff;border:1px solid #a8a8a8;border-left:none;border-bottom:none"></div>
<div class="t " style="left:3px;top:240px;color:#000;">Real-time recording</div>
<div class="a" style="left:81px;top:238.5px;width:57.5px;height:14px;background:linear-gradient(#f6f6f6,#dcdcdc);border:1px solid #a8a8a8;border-left:none;border-bottom:none"></div>
<div class="t " style="left:83.6px;top:240.8px;color:#000;">Internet users</div>
<div class="a" style="left:138.5px;top:238.5px;width:59px;height:14px;background:linear-gradient(#f6f6f6,#dcdcdc);border:1px solid #a8a8a8;border-left:none;border-bottom:none"></div>
<div class="t " style="left:142.9px;top:240.8px;color:#000;">cloud services</div>
<div class="a" style="left:0;top:252.5px;width:680px;height:238px;background:#fff"></div>
<div class="a" style="left:81px;top:252px;width:599px;height:1px;background:#b9b9c0"></div>
<div class="a" style="left:1.5px;top:255.5px;width:676.5px;height:240px;border:1.3px solid #a4a6ae;background:#fff"></div>
<div class="a" style="left:3px;top:257px;width:674px;height:15.5px;background:linear-gradient(#ffffff 0%,#ffffff 38%,#f2f3f5 40%,#f1f2f4 100%)"></div>
<div class="a" style="left:36.7px;top:257px;width:1px;height:15.5px;background:#e4e5e7"></div>
<div class="a" style="left:70.3px;top:257px;width:1px;height:15.5px;background:#e4e5e7"></div>
<div class="a" style="left:103.6px;top:257px;width:1px;height:15.5px;background:#e4e5e7"></div>
<div class="a" style="left:157.2px;top:257px;width:1px;height:15.5px;background:#e4e5e7"></div>
<div class="a" style="left:210.7px;top:257px;width:1px;height:15.5px;background:#e4e5e7"></div>
<div class="a" style="left:237.3px;top:257px;width:1px;height:15.5px;background:#e4e5e7"></div>
<div class="a" style="left:270.8px;top:257px;width:1px;height:15.5px;background:#e4e5e7"></div>
<div class="a" style="left:364.8px;top:257px;width:1px;height:15.5px;background:#e4e5e7"></div>
<div class="a" style="left:418.0px;top:257px;width:1px;height:15.5px;background:#e4e5e7"></div>
<div class="a" style="left:484.7px;top:257px;width:1px;height:15.5px;background:#e4e5e7"></div>
<div class="a" style="left:518.0px;top:257px;width:1px;height:15.5px;background:#e4e5e7"></div>
<div class="a" style="left:571.9px;top:257px;width:1px;height:15.5px;background:#e4e5e7"></div>
<div class="t g" style="left:7.1px;top:259.55px;color:#000;">Read</div>
<div class="t g" style="left:40.800000000000004px;top:259.55px;color:#000;">Seria...</div>
<div class="t g" style="left:74.39999999999999px;top:259.55px;color:#000;">Cha...</div>
<div class="t g" style="left:107.69999999999999px;top:259.55px;color:#000;">Line No.</div>
<div class="t gc" style="left:157.39999999999998px;width:53.5px;text-align:center;top:259.55px;color:#000;">Rings</div>
<div class="t g" style="left:214.79999999999998px;top:259.55px;color:#000;">TRK</div>
<div class="t g" style="left:241.4px;top:259.55px;color:#000;">Ext</div>
<div class="t g" style="left:274.90000000000003px;top:259.55px;color:#000;">Rec time</div>
<div class="t g" style="left:368.90000000000003px;top:259.55px;color:#000;">Conversati...</div>
<div class="t g" style="left:422.1px;top:259.55px;color:#000;">Dialling</div>
<div class="t g" style="left:488.8px;top:259.55px;color:#000;">Direc...</div>
<div class="t g" style="left:522.1px;top:259.55px;color:#000;">Memo</div>
<div class="t g" style="left:576.0px;top:259.55px;color:#000;">Rec file</div>
<div class="a" style="left:3px;top:272.4px;width:674px;height:1px;background:#f6f6f6"></div>
<div class="a" style="left:3px;top:285.09999999999997px;width:674px;height:1px;background:#f6f6f6"></div>
<div class="a" style="left:3px;top:297.79999999999995px;width:674px;height:1px;background:#f6f6f6"></div>
<div class="a" style="left:3px;top:310.5px;width:674px;height:1px;background:#f6f6f6"></div>
<div class="a" style="left:3px;top:323.2px;width:674px;height:1px;background:#f6f6f6"></div>
<div class="a" style="left:3px;top:335.9px;width:674px;height:1px;background:#f6f6f6"></div>
<div class="a" style="left:3px;top:348.59999999999997px;width:674px;height:1px;background:#f6f6f6"></div>
<div class="a" style="left:3px;top:361.29999999999995px;width:674px;height:1px;background:#f6f6f6"></div>
<div class="a" style="left:3px;top:374.0px;width:674px;height:1px;background:#f6f6f6"></div>
<div class="a" style="left:3px;top:386.7px;width:674px;height:1px;background:#f6f6f6"></div>
<div class="a" style="left:3px;top:399.4px;width:674px;height:1px;background:#f6f6f6"></div>
<div class="a" style="left:3px;top:412.09999999999997px;width:674px;height:1px;background:#f6f6f6"></div>
<div class="a" style="left:3px;top:424.79999999999995px;width:674px;height:1px;background:#f6f6f6"></div>
<div class="a" style="left:3px;top:437.5px;width:674px;height:1px;background:#f6f6f6"></div>
<div class="a" style="left:3px;top:450.19999999999993px;width:674px;height:1px;background:#f6f6f6"></div>
<div class="a" style="left:3px;top:462.9px;width:674px;height:1px;background:#f6f6f6"></div>
<div class="a" style="left:3px;top:475.59999999999997px;width:674px;height:1px;background:#f6f6f6"></div>
<div class="a" style="left:3px;top:488.29999999999995px;width:674px;height:1px;background:#f6f6f6"></div>
<div class="a" style="left:36.7px;top:272.5px;width:1px;height:220px;background:#f6f6f6"></div>
<div class="a" style="left:70.3px;top:272.5px;width:1px;height:220px;background:#f6f6f6"></div>
<div class="a" style="left:103.6px;top:272.5px;width:1px;height:220px;background:#f6f6f6"></div>
<div class="a" style="left:157.2px;top:272.5px;width:1px;height:220px;background:#f6f6f6"></div>
<div class="a" style="left:210.7px;top:272.5px;width:1px;height:220px;background:#f6f6f6"></div>
<div class="a" style="left:237.3px;top:272.5px;width:1px;height:220px;background:#f6f6f6"></div>
<div class="a" style="left:270.8px;top:272.5px;width:1px;height:220px;background:#f6f6f6"></div>
<div class="a" style="left:364.8px;top:272.5px;width:1px;height:220px;background:#f6f6f6"></div>
<div class="a" style="left:418.0px;top:272.5px;width:1px;height:220px;background:#f6f6f6"></div>
<div class="a" style="left:484.7px;top:272.5px;width:1px;height:220px;background:#f6f6f6"></div>
<div class="a" style="left:518.0px;top:272.5px;width:1px;height:220px;background:#f6f6f6"></div>
<div class="a" style="left:571.9px;top:272.5px;width:1px;height:220px;background:#f6f6f6"></div>
<div class="a" style="left:17px;top:273.5px;width:19.700000000000003px;height:11.6px;background:#ffb6c1;box-shadow:inset 0 0 0 0.4px #f9a6b4"></div>
<div class="a" style="left:37.7px;top:273.5px;width:32.599999999999994px;height:11.6px;background:#ffb6c1;box-shadow:inset 0 0 0 0.4px #f9a6b4"></div>
<div class="a" style="left:71.3px;top:273.5px;width:32.3px;height:11.6px;background:#ffb6c1;box-shadow:inset 0 0 0 0.4px #f9a6b4"></div>
<div class="a" style="left:104.6px;top:273.5px;width:52.599999999999994px;height:11.6px;background:#ffb6c1;box-shadow:inset 0 0 0 0.4px #f9a6b4"></div>
<div class="a" style="left:158.2px;top:273.5px;width:52.5px;height:11.6px;background:#ffb6c1;box-shadow:inset 0 0 0 0.4px #f9a6b4"></div>
<div class="a" style="left:211.7px;top:273.5px;width:25.600000000000023px;height:11.6px;background:#ffb6c1;box-shadow:inset 0 0 0 0.4px #f9a6b4"></div>
<div class="a" style="left:238.3px;top:273.5px;width:32.5px;height:11.6px;background:#ffb6c1;box-shadow:inset 0 0 0 0.4px #f9a6b4"></div>
<div class="a" style="left:271.8px;top:273.5px;width:93.0px;height:11.6px;background:#ffb6c1;box-shadow:inset 0 0 0 0.4px #f9a6b4"></div>
<div class="a" style="left:365.8px;top:273.5px;width:52.19999999999999px;height:11.6px;background:#ffb6c1;box-shadow:inset 0 0 0 0.4px #f9a6b4"></div>
<div class="a" style="left:419.0px;top:273.5px;width:65.69999999999999px;height:11.6px;background:#ffb6c1;box-shadow:inset 0 0 0 0.4px #f9a6b4"></div>
<div class="a" style="left:485.7px;top:273.5px;width:32.30000000000001px;height:11.6px;background:#ffb6c1;box-shadow:inset 0 0 0 0.4px #f9a6b4"></div>
<div class="a" style="left:519.0px;top:273.5px;width:52.89999999999998px;height:11.6px;background:#ffb6c1;box-shadow:inset 0 0 0 0.4px #f9a6b4"></div>
<div class="a" style="left:572.9px;top:273.5px;width:103.60000000000002px;height:11.6px;background:#ffb6c1;box-shadow:inset 0 0 0 0.4px #f9a6b4"></div>
<div class="t g" style="left:40.800000000000004px;top:274.35px;color:#000;">003</div>
<div class="t g" style="left:74.39999999999999px;top:274.35px;color:#000;">01</div>
<div class="t gc" style="left:157.39999999999998px;width:53.5px;text-align:center;top:274.35px;color:#000;">02</div>
<div class="t g" style="left:214.79999999999998px;top:274.35px;color:#000;">1</div>
<div class="t g" style="left:241.4px;top:274.35px;color:#000;">108</div>
<div class="t g" style="left:274.90000000000003px;top:274.35px;color:#000;">2019-06-28 13:57:59</div>
<div class="t g" style="left:368.90000000000003px;top:274.35px;color:#000;">00:00:00</div>
<div class="t g" style="left:422.1px;top:274.35px;color:#000;">00008005</div>
<div class="t g" style="left:488.8px;top:274.35px;color:#000;">Miss...</div>
<div class="a" style="left:17px;top:286.2px;width:19.700000000000003px;height:11.6px;background:#90ee90;box-shadow:inset 0 0 0 0.4px #7fe07f"></div>
<div class="a" style="left:37.7px;top:286.2px;width:32.599999999999994px;height:11.6px;background:#90ee90;box-shadow:inset 0 0 0 0.4px #7fe07f"></div>
<div class="a" style="left:71.3px;top:286.2px;width:32.3px;height:11.6px;background:#90ee90;box-shadow:inset 0 0 0 0.4px #7fe07f"></div>
<div class="a" style="left:104.6px;top:286.2px;width:52.599999999999994px;height:11.6px;background:#90ee90;box-shadow:inset 0 0 0 0.4px #7fe07f"></div>
<div class="a" style="left:158.2px;top:286.2px;width:52.5px;height:11.6px;background:#90ee90;box-shadow:inset 0 0 0 0.4px #7fe07f"></div>
<div class="a" style="left:211.7px;top:286.2px;width:25.600000000000023px;height:11.6px;background:#90ee90;box-shadow:inset 0 0 0 0.4px #7fe07f"></div>
<div class="a" style="left:238.3px;top:286.2px;width:32.5px;height:11.6px;background:#90ee90;box-shadow:inset 0 0 0 0.4px #7fe07f"></div>
<div class="a" style="left:271.8px;top:286.2px;width:93.0px;height:11.6px;background:#90ee90;box-shadow:inset 0 0 0 0.4px #7fe07f"></div>
<div class="a" style="left:365.8px;top:286.2px;width:52.19999999999999px;height:11.6px;background:#90ee90;box-shadow:inset 0 0 0 0.4px #7fe07f"></div>
<div class="a" style="left:419.0px;top:286.2px;width:65.69999999999999px;height:11.6px;background:#90ee90;box-shadow:inset 0 0 0 0.4px #7fe07f"></div>
<div class="a" style="left:485.7px;top:286.2px;width:32.30000000000001px;height:11.6px;background:#90ee90;box-shadow:inset 0 0 0 0.4px #7fe07f"></div>
<div class="a" style="left:519.0px;top:286.2px;width:52.89999999999998px;height:11.6px;background:#90ee90;box-shadow:inset 0 0 0 0.4px #7fe07f"></div>
<div class="a" style="left:572.9px;top:286.2px;width:103.60000000000002px;height:11.6px;background:#90ee90;box-shadow:inset 0 0 0 0.4px #7fe07f"></div>
<div class="t g" style="left:40.800000000000004px;top:287.05px;color:#000;">002</div>
<div class="t g" style="left:74.39999999999999px;top:287.05px;color:#000;">01</div>
<div class="t gc" style="left:157.39999999999998px;width:53.5px;text-align:center;top:287.05px;color:#000;">02</div>
<div class="t g" style="left:214.79999999999998px;top:287.05px;color:#000;">1</div>
<div class="t g" style="left:241.4px;top:287.05px;color:#000;">109</div>
<div class="t g" style="left:274.90000000000003px;top:287.05px;color:#000;">2019-06-28 13:57:31</div>
<div class="t g" style="left:368.90000000000003px;top:287.05px;color:#000;">00:00:04</div>
<div class="t g" style="left:422.1px;top:287.05px;color:#000;">00008005</div>
<div class="t g" style="left:488.8px;top:287.05px;color:#000;">In</div>
<div class="t g" style="left:576.0px;top:287.05px;color:#000;">E:\REC201906\2019062...</div>
<div class="a" style="left:17px;top:298.9px;width:19.700000000000003px;height:11.6px;background:#87cefa;box-shadow:inset 0 0 0 0.4px #74bdf0"></div>
<div class="a" style="left:37.7px;top:298.9px;width:32.599999999999994px;height:11.6px;background:#87cefa;box-shadow:inset 0 0 0 0.4px #74bdf0"></div>
<div class="a" style="left:71.3px;top:298.9px;width:32.3px;height:11.6px;background:#87cefa;box-shadow:inset 0 0 0 0.4px #74bdf0"></div>
<div class="a" style="left:104.6px;top:298.9px;width:52.599999999999994px;height:11.6px;background:#87cefa;box-shadow:inset 0 0 0 0.4px #74bdf0"></div>
<div class="a" style="left:158.2px;top:298.9px;width:52.5px;height:11.6px;background:#87cefa;box-shadow:inset 0 0 0 0.4px #74bdf0"></div>
<div class="a" style="left:211.7px;top:298.9px;width:25.600000000000023px;height:11.6px;background:#87cefa;box-shadow:inset 0 0 0 0.4px #74bdf0"></div>
<div class="a" style="left:238.3px;top:298.9px;width:32.5px;height:11.6px;background:#87cefa;box-shadow:inset 0 0 0 0.4px #74bdf0"></div>
<div class="a" style="left:271.8px;top:298.9px;width:93.0px;height:11.6px;background:#87cefa;box-shadow:inset 0 0 0 0.4px #74bdf0"></div>
<div class="a" style="left:365.8px;top:298.9px;width:52.19999999999999px;height:11.6px;background:#87cefa;box-shadow:inset 0 0 0 0.4px #74bdf0"></div>
<div class="a" style="left:419.0px;top:298.9px;width:65.69999999999999px;height:11.6px;background:#87cefa;box-shadow:inset 0 0 0 0.4px #74bdf0"></div>
<div class="a" style="left:485.7px;top:298.9px;width:32.30000000000001px;height:11.6px;background:#87cefa;box-shadow:inset 0 0 0 0.4px #74bdf0"></div>
<div class="a" style="left:519.0px;top:298.9px;width:52.89999999999998px;height:11.6px;background:#87cefa;box-shadow:inset 0 0 0 0.4px #74bdf0"></div>
<div class="a" style="left:572.9px;top:298.9px;width:103.60000000000002px;height:11.6px;background:#87cefa;box-shadow:inset 0 0 0 0.4px #74bdf0"></div>
<div class="t g" style="left:40.800000000000004px;top:299.75px;color:#000;">001</div>
<div class="t g" style="left:74.39999999999999px;top:299.75px;color:#000;">01</div>
<div class="t gc" style="left:157.39999999999998px;width:53.5px;text-align:center;top:299.75px;color:#000;">00</div>
<div class="t g" style="left:214.79999999999998px;top:299.75px;color:#000;">1</div>
<div class="t g" style="left:241.4px;top:299.75px;color:#000;">108</div>
<div class="t g" style="left:274.90000000000003px;top:299.75px;color:#000;">2019-06-28 13:56:40</div>
<div class="t g" style="left:368.90000000000003px;top:299.75px;color:#000;">00:00:25</div>
<div class="t g" style="left:422.1px;top:299.75px;color:#000;">88005</div>
<div class="t g" style="left:488.8px;top:299.75px;color:#000;">Out</div>
<div class="t g" style="left:576.0px;top:299.75px;color:#000;">E:\REC201906\2019062...</div></body></html>
